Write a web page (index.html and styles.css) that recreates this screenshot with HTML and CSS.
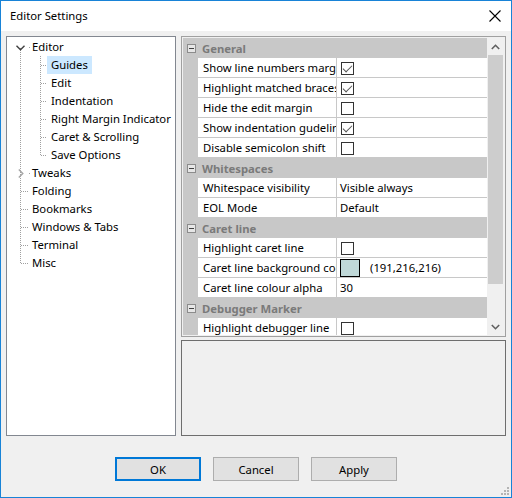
FILE: index.html
```
<!DOCTYPE html>
<html>
<head>
<meta charset="utf-8">
<link rel="stylesheet" href="styles.css">
</head>
<body>
<div class="window">
  <div class="titlebar">
    <span class="title">Editor Settings</span>
    <svg class="close" width="12" height="12" viewBox="0 0 12 12"><path d="M0.5 0.5 L11.5 11.5 M11.5 0.5 L0.5 11.5" stroke="#000" stroke-width="1.1" fill="none"/></svg>
  </div>
  <div class="content">
    <div class="main">
      <div class="tree">
        <div class="row l0 open">
          <svg class="chev" width="9" height="6" viewBox="0 0 9 6"><path d="M0.5 0.8 L4.5 4.8 L8.5 0.8" stroke="#404040" stroke-width="1.4" fill="none"/></svg>
          <span class="lbl">Editor</span>
        </div>
        <div class="row l1"><span class="lbl sel">Guides</span></div>
        <div class="row l1"><span class="lbl">Edit</span></div>
        <div class="row l1"><span class="lbl">Indentation</span></div>
        <div class="row l1"><span class="lbl">Right Margin Indicator</span></div>
        <div class="row l1"><span class="lbl">Caret &amp; Scrolling</span></div>
        <div class="row l1 last"><span class="lbl">Save Options</span></div>
        <div class="row l0 closed">
          <svg class="chev2" width="6" height="9" viewBox="0 0 6 9"><path d="M0.8 0.5 L4.8 4.5 L0.8 8.5" stroke="#a6a6a6" stroke-width="1.4" fill="none"/></svg>
          <span class="lbl">Tweaks</span>
        </div>
        <div class="row l0"><span class="lbl">Folding</span></div>
        <div class="row l0"><span class="lbl">Bookmarks</span></div>
        <div class="row l0"><span class="lbl">Windows &amp; Tabs</span></div>
        <div class="row l0"><span class="lbl">Terminal</span></div>
        <div class="row l0"><span class="lbl">Misc</span></div>
      </div>
      <div class="right">
        <div class="grid">
          <div class="rows">
            <div class="cat"><span class="box"></span><span class="cname">General</span></div>
            <div class="prop"><div class="gut"></div><div class="name">Show line numbers margin</div><div class="val"><span class="cb on"></span></div></div>
            <div class="prop"><div class="gut"></div><div class="name">Highlight matched braces</div><div class="val"><span class="cb on"></span></div></div>
            <div class="prop"><div class="gut"></div><div class="name">Hide the edit margin</div><div class="val"><span class="cb"></span></div></div>
            <div class="prop"><div class="gut"></div><div class="name">Show indentation gudelines</div><div class="val"><span class="cb on"></span></div></div>
            <div class="prop"><div class="gut"></div><div class="name">Disable semicolon shift</div><div class="val"><span class="cb"></span></div></div>
            <div class="cat"><span class="box"></span><span class="cname">Whitespaces</span></div>
            <div class="prop"><div class="gut"></div><div class="name">Whitespace visibility</div><div class="val text">Visible always</div></div>
            <div class="prop"><div class="gut"></div><div class="name">EOL Mode</div><div class="val text">Default</div></div>
            <div class="cat"><span class="box"></span><span class="cname">Caret line</span></div>
            <div class="prop"><div class="gut"></div><div class="name">Highlight caret line</div><div class="val"><span class="cb"></span></div></div>
            <div class="prop"><div class="gut"></div><div class="name">Caret line background colour</div><div class="val text"><span class="swatch"></span><span class="rgb">(191,216,216)</span></div></div>
            <div class="prop"><div class="gut"></div><div class="name">Caret line colour alpha</div><div class="val text">30</div></div>
            <div class="cat"><span class="box"></span><span class="cname">Debugger Marker</span></div>
            <div class="prop"><div class="gut"></div><div class="name">Highlight debugger line</div><div class="val"><span class="cb"></span></div></div>
          </div>
          <div class="sbar">
            <div class="arrow"><svg width="9" height="6" viewBox="0 0 9 6"><path d="M0.8 5 L4.5 1.3 L8.2 5" stroke="#606060" stroke-width="1.6" fill="none"/></svg></div>
            <div class="thumb"></div>
            <div class="track"></div>
            <div class="arrow"><svg width="9" height="6" viewBox="0 0 9 6"><path d="M0.8 1 L4.5 4.7 L8.2 1" stroke="#606060" stroke-width="1.6" fill="none"/></svg></div>
          </div>
        </div>
        <div class="desc"></div>
      </div>
    </div>
    <div class="buttons">
      <button class="btn default">OK</button>
      <button class="btn">Cancel</button>
      <button class="btn">Apply</button>
    </div>
    <svg class="grip" width="10" height="10" viewBox="0 0 10 10">
      <rect x="7" y="1" width="2" height="2" fill="#b4b4b4"/>
      <rect x="4" y="4" width="2" height="2" fill="#b4b4b4"/>
      <rect x="7" y="4" width="2" height="2" fill="#b4b4b4"/>
      <rect x="1" y="7" width="2" height="2" fill="#b4b4b4"/>
      <rect x="4" y="7" width="2" height="2" fill="#b4b4b4"/>
      <rect x="7" y="7" width="2" height="2" fill="#b4b4b4"/>
    </svg>
  </div>
</div>
</body>
</html>
```
FILE: styles.css
```
* { box-sizing: border-box; }
html, body { margin: 0; padding: 0; }
body {
  width: 512px; height: 498px; overflow: hidden;
  font-family: "Segoe UI", "Noto Sans", "Liberation Sans", sans-serif;
  font-size: 11.3px; color: #000;
}
.window {
  width: 512px; height: 498px;
  border: 1px solid #1883d7;
  display: flex; flex-direction: column;
  background: #f0f0f0;
}
.titlebar {
  height: 30px; background: #fff;
  display: flex; align-items: center; justify-content: space-between;
  padding: 0 10px 0 9px;
}
.title { font-size: 11.3px; line-height: 16px; }
.close { display: block; }
.content {
  flex: 1; position: relative;
  padding: 5px 5px 0 5px;
  display: flex; flex-direction: column;
}
.main { display: flex; gap: 5px; height: 400px; }
.tree {
  width: 170px; height: 400px;
  background: #fff; border: 1px solid #828790;
  padding-top: 1px; position: relative;
}
.tree::before {
  content: ""; position: absolute; left: 13px; top: 11px; width: 1px; height: 216px;
  background-image: linear-gradient(to bottom, #a0a0a0 50%, transparent 50%);
  background-size: 1px 2px;
}
.tree::after {
  content: ""; position: absolute; left: 33px; top: 19px; width: 1px; height: 100px;
  background-image: linear-gradient(to bottom, #a0a0a0 50%, transparent 50%);
  background-size: 1px 2px;
}
.row {
  height: 18px; display: flex; align-items: center; position: relative;
  white-space: nowrap; line-height: 18px;
}
.row::before {
  content: ""; position: absolute; top: 9px; height: 1px; width: 8px;
  background-image: linear-gradient(to right, #a0a0a0 50%, transparent 50%);
  background-size: 2px 1px;
}
.l0 { padding-left: 25px; }
.l0::before { left: 14px; }
.l0.open::before, .l0.closed::before { left: 22px; width: 2px; }
.l1 { padding-left: 40px; }
.l1::before { left: 34px; width: 6px; }
.lbl { padding: 0 4px 0 0; }
.l1 .lbl { padding: 0 4px; }
.l0 .lbl { padding: 0 4px 0 0; }
.sel { background: #cce8ff; }
.chev { position: absolute; left: 9px; top: 7px; }
.chev2 { position: absolute; left: 11px; top: 5px; }

.right { display: flex; flex-direction: column; gap: 3px; width: 325px; }
.grid {
  height: 301px; border: 1px solid #a0a0a0; padding: 1px;
  background: #f0f0f0; display: flex;
}
.rows { width: 304px; overflow: hidden; display: flex; flex-direction: column; }
.cat {
  height: 20px; flex: none; background: #c8c8c8;
  display: flex; align-items: center;
}
.box {
  width: 9px; height: 9px; margin-left: 4px; margin-right: 6px;
  border: 1px solid #8c8c8c; background: #e6e6e6; position: relative;
}
.box::after {
  content: ""; position: absolute; left: 1px; top: 3px; width: 5px; height: 1px; background: #404040;
}
.cname { font-weight: bold; color: #7a7a7a; line-height: 19px; }
.prop { height: 20px; flex: none; display: flex; }
.gut { width: 15px; background: #c8c8c8; }
.name {
  width: 139px; background: #fff; border-right: 1px solid #c8c8c8;
  border-bottom: 1px solid #c8c8c8;
  padding-left: 5px; white-space: nowrap; overflow: hidden; line-height: 19px;
}
.val {
  flex: 1; background: #fff; border-bottom: 1px solid #c8c8c8;
  padding: 4px 0 0 4px; display: flex; align-items: flex-start;
}
.val.text { padding: 0 0 0 3px; line-height: 19px; align-items: center; }
.cb {
  width: 13px; height: 13px; border: 1px solid #333; background: #fff; position: relative;
}
.cb.on::after {
  content: ""; position: absolute; left: 3px; top: 0px; width: 4px; height: 8px;
  border-right: 1px solid #555; border-bottom: 1px solid #555;
  transform: rotate(45deg);
}
.swatch {
  width: 20px; height: 18px; border: 1px solid #000; background: #bfd8d8; flex: none;
}
.rgb { margin-left: 10px; }
.sbar { width: 17px; display: flex; flex-direction: column; }
.arrow { height: 17px; display: flex; align-items: center; justify-content: center; flex: none; }
.thumb { height: 229px; background: #cdcdcd; margin: 0 1px; flex: none; }
.track { flex: 1; }
.desc { height: 96px; border: 1px solid #6e6e6e; background: #f0f0f0; }

.buttons { display: flex; gap: 12px; padding-left: 109px; margin-top: 21px; }
.btn {
  width: 86px; height: 24px; background: #e1e1e1; border: 1px solid #adadad;
  font-family: inherit; font-size: 11.3px; color: #000; padding: 0; margin: 0;
}
.btn.default { border: 2px solid #0078d7; }
.grip { position: absolute; right: 1px; bottom: 1px; }
```
